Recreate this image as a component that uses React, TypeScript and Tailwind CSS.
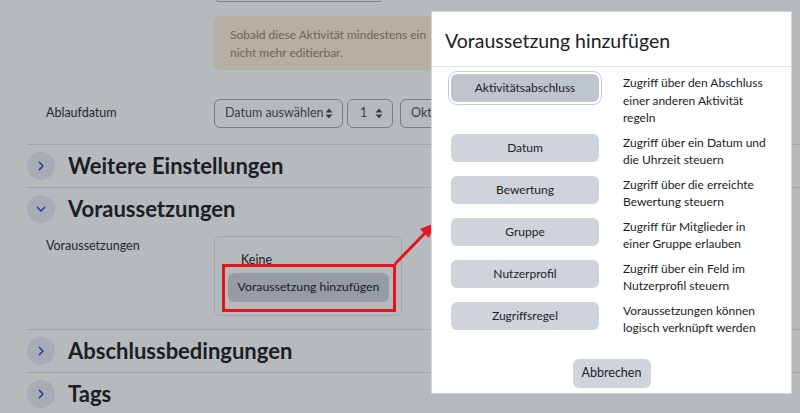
import React from 'react';

// Moodle: "Voraussetzung hinzufügen" Dialog über dem Formular (Backdrop gedimmt)

const font = "font-['Segoe_UI','Lato','Noto_Sans',sans-serif]";

function SortArrows() {
  return (
    <svg width="8" height="11" viewBox="0 0 8 11" className="shrink-0" aria-hidden="true">
      <path d="M4 0.5 L7.5 4.5 H0.5 Z" fill="currentColor" />
      <path d="M4 10.5 L7.5 6.5 H0.5 Z" fill="currentColor" />
    </svg>
  );
}

function Chevron({ open }: { open?: boolean }) {
  return (
    <span className="w-7 h-7 rounded-full bg-[#e8ebf7] flex items-center justify-center text-[#2f45c8] shrink-0">
      <svg width="12" height="12" viewBox="0 0 12 12" fill="none" aria-hidden="true">
        {open ? (
          <path d="M2.3 4.3 L6 8 L9.7 4.3" stroke="currentColor" strokeWidth="1.5" strokeLinecap="round" strokeLinejoin="round" />
        ) : (
          <path d="M4.3 2.3 L8 6 L4.3 9.7" stroke="currentColor" strokeWidth="1.5" strokeLinecap="round" strokeLinejoin="round" />
        )}
      </svg>
    </span>
  );
}

function SectionHeader({ title, open }: { title: string; open?: boolean }) {
  return (
    <div className="border-t border-[#dee2e6] h-[43px] flex items-center">
      <Chevron open={open} />
      <h3 className="ml-[13px] text-[22px] font-bold text-[#1d2125] leading-none">{title}</h3>
    </div>
  );
}

const conditions = [
  { label: 'Aktivitätsabschluss', text: 'Zugriff über den Abschluss einer anderen Aktivität regeln', focus: true },
  { label: 'Datum', text: 'Zugriff über ein Datum und die Uhrzeit steuern' },
  { label: 'Bewertung', text: 'Zugriff über die erreichte Bewertung steuern' },
  { label: 'Gruppe', text: 'Zugriff für Mitglieder in einer Gruppe erlauben' },
  { label: 'Nutzerprofil', text: 'Zugriff über ein Feld im Nutzerprofil steuern' },
  { label: 'Zugriffsregel', text: 'Voraussetzungen können logisch verknüpft werden' },
];

export default function App() {
  return (
    <div className={`relative w-[800px] h-[413px] overflow-hidden bg-white ${font} text-[#1d2125]`}>
      {/* Formular im Hintergrund */}
      <div className="pl-[27px]">
        <div className="ml-[189px] w-[165px] h-[2px] border-x border-b border-[#a3a8ae] rounded-b-[4px]" />

        {/* Hinweis läuft unter dem Dialog weiter */}
        <div className="mt-[14px] ml-[187px] w-[217px] h-[54px] overflow-hidden rounded-l-[6px] bg-[#fcefdc] pl-[16px] pt-[10px] text-[12px] leading-[17.5px] text-[#98846a] whitespace-nowrap">
          Sobald diese Aktivität mindestens ein
          <br />
          nicht mehr editierbar.
        </div>

        <div className="mt-[29px] flex items-center">
          <div className="w-[187px] pl-[19px] text-[12.5px] text-[#2b2f33]">Ablaufdatum</div>
          <div className="flex gap-[4px]">
            <div className="h-[29px] w-[129px] border border-[#a3a8ae] rounded-[6px] pl-[10px] pr-[9px] flex items-center justify-between text-[12.5px] text-[#495057] whitespace-nowrap">
              Datum auswählen <SortArrows />
            </div>
            <div className="h-[29px] w-[46px] border border-[#a3a8ae] rounded-[6px] pl-[12px] pr-[9px] flex items-center justify-between text-[12.5px] text-[#495057]">
              1 <SortArrows />
            </div>
            <div className="ml-[3px] h-[29px] w-[80px] border border-[#a3a8ae] rounded-[6px] pl-[10px] flex items-center text-[12.5px] text-[#495057]">
              Oktober
            </div>
          </div>
        </div>

        <div className="mt-[16px]">
          <SectionHeader title="Weitere Einstellungen" />
          <SectionHeader title="Voraussetzungen" open />
          <div className="flex pt-[6px] pb-[13px]">
            <div className="w-[187px] pl-[19px] pt-[1px] text-[12.5px] text-[#2b2f33]">Voraussetzungen</div>
            <div className="w-[188px] h-[80px] border border-[#dee2e6] rounded-[6px] pl-[13px] pt-[14px]">
              <div className="pl-[13px] text-[12.5px] leading-[17px]">Keine</div>
              <button className="mt-[5px] h-[29px] w-[161px] rounded-[6px] bg-[#ced4da] text-[12.3px] text-[#1d2125] whitespace-nowrap">
                Voraussetzung hinzufügen
              </button>
            </div>
          </div>
          <SectionHeader title="Abschlussbedingungen" />
          <SectionHeader title="Tags" />
        </div>
      </div>

      {/* Backdrop */}
      <div className="absolute inset-0 bg-[#0f1a24]/30" />

      {/* Markierung */}
      <div className="absolute left-[222px] top-[264px] w-[174px] h-[48px] border-[3px] border-[#e3161d]" />
      <svg className="absolute left-[380px] top-[210px]" width="60" height="60" viewBox="0 0 60 60" aria-hidden="true">
        <line x1="15" y1="54" x2="48" y2="20" stroke="#e3161d" strokeWidth="3" />
        <path d="M55 13 L40 19 L49 28 Z" fill="#e3161d" />
      </svg>

      {/* Dialog */}
      <div className="absolute left-[431px] top-[11px] w-[361px] h-[383px] bg-white border border-[#d4d6d8] flex flex-col">
        <div className="h-[55px] shrink-0 border-b border-[#dee2e6] px-[13px] pt-[3px] flex items-center">
          <h5 className="text-[19.5px] text-[#1d2125]">Voraussetzung hinzufügen</h5>
        </div>
        <div className="px-[19px] pt-[7px] flex flex-col gap-[7px]">
          {conditions.map((c) => (
            <div key={c.label} className="flex gap-[24px]">
              <button
                className={`w-[148px] h-[28px] shrink-0 rounded-[6px] text-[12px] text-[#1d2125] whitespace-nowrap ${
                  c.focus ? 'bg-[#bfc5cc] ring-1 ring-[#c6cbd0] ring-offset-2' : 'bg-[#ced4da]'
                }`}
              >
                {c.label}
              </button>
              <p className="w-[155px] text-[12px] leading-[17.5px] text-[#1d2125]">{c.text}</p>
            </div>
          ))}
        </div>
        <div className="mt-[22px] flex justify-center">
          <button className="w-[78px] h-[29px] rounded-[6px] bg-[#ced4da] text-[12.5px] text-[#1d2125]">Abbrechen</button>
        </div>
      </div>
    </div>
  );
}
